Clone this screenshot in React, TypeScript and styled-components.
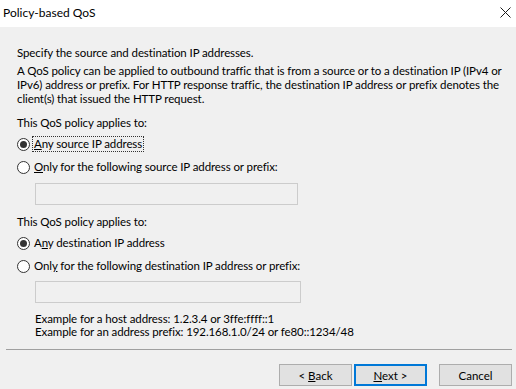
import React from "react";
import styled, { createGlobalStyle } from "styled-components";

const Global = createGlobalStyle`
  html, body { margin: 0; padding: 0; background: #ffffff; }
  body { font-family: Lato, "Noto Sans", sans-serif; font-size: 11.5px; color: #000; }
  * { box-sizing: border-box; }
`;

const Window = styled.div`
  width: 516px;
  height: 389px;
  display: flex;
  flex-direction: column;
  overflow: hidden;
  background: #f0f0f0;
`;

const TitleBar = styled.div`
  height: 27px;
  background: #ffffff;
  display: flex;
  align-items: center;
  justify-content: space-between;
  padding: 0 3px 2px 3px;
`;

const Title = styled.span`
  font-size: 12px;
`;

const CloseBtn = styled.div`
  width: 12px;
  height: 12px;
  display: flex;
  align-items: center;
  justify-content: center;
  margin-right: 2px;
`;

const Content = styled.div`
  height: 322px;
  padding: 19px 0 0 17px;
  display: flex;
  flex-direction: column;
  font-size: 11.5px;
  letter-spacing: -0.1px;
`;

const Text = styled.div<{ $mt?: number }>`
  line-height: 14px;
  margin-top: ${(p) => p.$mt ?? 0}px;
  white-space: nowrap;
`;

const RadioRow = styled.label<{ $mt: number }>`
  display: flex;
  align-items: center;
  height: 16px;
  margin-top: ${(p) => p.$mt}px;
`;

const Circle = styled.span<{ $checked?: boolean }>`
  width: 13px;
  height: 13px;
  border-radius: 50%;
  border: 1px solid #333333;
  background: #ffffff;
  display: flex;
  align-items: center;
  justify-content: center;
  margin-right: 2px;
  &::after {
    content: "";
    width: 7px;
    height: 7px;
    border-radius: 50%;
    background: ${(p) => (p.$checked ? "#333333" : "transparent")};
  }
`;

const RadioLabel = styled.span<{ $focus?: boolean }>`
  line-height: 14px;
  padding: 0 1px;
  border: 1px dotted ${(p) => (p.$focus ? "#333333" : "transparent")};
`;

const Key = styled.span`
  text-decoration: underline;
  text-underline-offset: 1px;
`;

const TextBox = styled.div<{ $mt: number; $w: number }>`
  margin: ${(p) => p.$mt}px 0 0 18px;
  width: ${(p) => p.$w}px;
  height: 22px;
  border: 1px solid #cccccc;
  background: #f0f0f0;
`;

const Examples = styled.div`
  margin: 9px 0 0 18px;
  line-height: 13px;
`;

const Separator = styled.div`
  height: 1px;
  margin: 0 4px 0 6px;
  background: #a0a0a0;
`;

const Footer = styled.div`
  display: flex;
  justify-content: flex-end;
  padding: 14px 4px 0 0;
`;

const Button = styled.div<{ $focus?: boolean; $ml: number }>`
  width: 73px;
  height: 22px;
  margin-left: ${(p) => p.$ml}px;
  background: #e1e1e1;
  border: ${(p) => (p.$focus ? "2px solid #0078d7" : "1px solid #adadad")};
  display: flex;
  align-items: center;
  justify-content: center;
  font-size: 11.5px;
`;

const ButtonLabel = styled.span`
  white-space: pre;
`;

export default function App() {
  return (
    <Window>
      <Global />
      <TitleBar>
        <Title>Policy-based QoS</Title>
        <CloseBtn>
          <svg width="11" height="11" viewBox="0 0 11 11">
            <path d="M0.5 0.5 L10.5 10.5 M10.5 0.5 L0.5 10.5" stroke="#1a1a1a" strokeWidth="1" fill="none" />
          </svg>
        </CloseBtn>
      </TitleBar>
      <Content>
        <Text>Specify the source and destination IP addresses.</Text>
        <Text $mt={4}>
          A QoS policy can be applied to outbound traffic that is from a source or to a destination IP (IPv4 or
          <br />
          IPv6) address or prefix. For HTTP response traffic, the destination IP address or prefix denotes the
          <br />
          client(s) that issued the HTTP request.
        </Text>
        <Text $mt={10}>This QoS policy applies to:</Text>
        <RadioRow $mt={6}>
          <Circle $checked />
          <RadioLabel $focus>
            <Key>A</Key>ny source IP address
          </RadioLabel>
        </RadioRow>
        <RadioRow $mt={7}>
          <Circle />
          <RadioLabel>
            <Key>O</Key>nly for the following source IP address or prefix:
          </RadioLabel>
        </RadioRow>
        <TextBox $mt={8} $w={263} />
        <Text $mt={10}>This QoS policy applies to:</Text>
        <RadioRow $mt={6}>
          <Circle $checked />
          <RadioLabel>
            A<Key>n</Key>y destination IP address
          </RadioLabel>
        </RadioRow>
        <RadioRow $mt={7}>
          <Circle />
          <RadioLabel>
            Onl<Key>y</Key> for the following destination IP address or prefix:
          </RadioLabel>
        </RadioRow>
        <TextBox $mt={7} $w={266} />
        <Examples>
          Example for a host address: 1.2.3.4 or 3ffe:ffff::1
          <br />
          Example for an address prefix: 192.168.1.0/24 or fe80::1234/48
        </Examples>
      </Content>
      <Separator />
      <Footer>
        <Button $ml={0}>
          <ButtonLabel>
            {"< "}
            <Key>B</Key>ack
          </ButtonLabel>
        </Button>
        <Button $ml={2} $focus>
          <ButtonLabel>
            <Key>N</Key>
            {"ext >"}
          </ButtonLabel>
        </Button>
        <Button $ml={12}>
          <ButtonLabel>Cancel</ButtonLabel>
        </Button>
      </Footer>
    </Window>
  );
}
